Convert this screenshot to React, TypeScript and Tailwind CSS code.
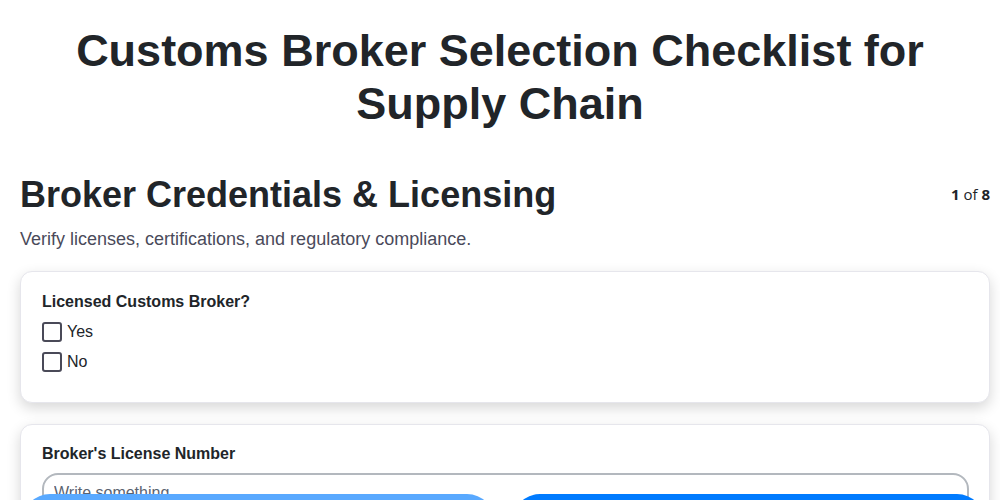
import { useState } from "react";

const options = ["Yes", "No"];

function CheckOption({ label }: { label: string }) {
    const [checked, setChecked] = useState(false);
    return (
        <label className="flex items-center h-[30px] gap-[5px] cursor-pointer">
            <input
                type="checkbox"
                checked={checked}
                onChange={() => setChecked(!checked)}
                className="appearance-none w-5 h-5 border-2 border-[#4a4a58] rounded-[3px] bg-white checked:bg-[#007bff] checked:border-[#007bff]"
            />
            <span className="text-base text-[#212529]">{label}</span>
        </label>
    );
}

export default function App() {
    return (
        <div className="min-h-screen bg-white font-['Liberation_Sans',Arial,sans-serif] text-[#212529]">
            <h1 className="pt-[24px] px-10 text-center text-[45px] leading-[53px] font-bold">
                Customs Broker Selection Checklist for Supply Chain
            </h1>

            <div className="pl-5 pr-[10px] mt-[43px] pb-24">
                <div className="flex items-start justify-between">
                    <h2 className="text-[36px] leading-[44px] font-bold">Broker Credentials &amp; Licensing</h2>
                    <div className="mt-[10px] text-[15px] font-['Open_Sans',sans-serif] text-[#212529]">
                        <span className="font-bold">1</span> of <span className="font-bold">8</span>
                    </div>
                </div>
                <p className="mt-[11px] text-[18px] leading-[22px] text-[#4a4a5a]">
                    Verify licenses, certifications, and regulatory compliance.
                </p>

                <div className="mt-[21px] flex flex-col gap-[21px]">
                    <div className="bg-white border border-[#e6e6ec] rounded-xl shadow-[0_5px_14px_rgba(0,0,0,0.16)] pl-[21px] pr-5 pt-[22px] pb-[25px]">
                        <div className="text-base leading-4 font-bold mb-[7px]">Licensed Customs Broker?</div>
                        {options.map((o) => (
                            <CheckOption key={o} label={o} />
                        ))}
                    </div>

                    <div className="bg-white border border-[#e6e6ec] rounded-xl shadow-[0_5px_14px_rgba(0,0,0,0.16)] pl-[21px] pr-5 pt-[21px] pb-6">
                        <div className="text-base leading-4 font-bold mb-[11px]">Broker's License Number</div>
                        <input
                            type="text"
                            placeholder="Write something..."
                            className="w-full h-[40px] border-2 border-[#b3b8be] rounded-2xl px-[10px] text-base outline-none placeholder:text-[#5a6270]"
                        />
                    </div>
                </div>
            </div>

            <div className="fixed left-[22px] right-[15px] bottom-[-50px] flex gap-[17px]">
                <button className="flex-1 h-[56px] rounded-full bg-[#59a9ff] text-white font-bold">Previous</button>
                <button className="flex-1 h-[56px] rounded-full bg-[#007bff] text-white font-bold">Next</button>
            </div>
        </div>
    );
}
